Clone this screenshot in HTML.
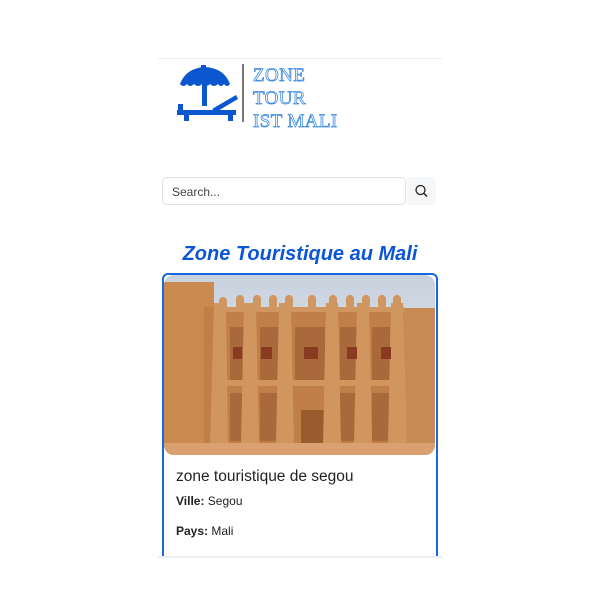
<!DOCTYPE html>
<html><head><style>
body{margin:0;width:600px;height:600px;background:#fff;font-family:"Liberation Sans",sans-serif;position:relative;overflow:hidden}
.hr{position:absolute;left:158px;width:284px;height:1px;background:#eceef0}
.search{position:absolute;left:162px;top:177px;width:244px;height:28px;border:1px solid #dee2e6;border-radius:5px;box-sizing:border-box;font-size:12px;color:#444;padding:7px 9px}
.btn{position:absolute;left:407px;top:177px;width:29px;height:28px;background:#f6f7f8;border-radius:0 5px 5px 0}
h1{position:absolute;left:0;width:600px;top:243px;margin:0;text-align:center;font:italic bold 20px "Liberation Sans",sans-serif;color:#0b56d6}
.card{position:absolute;left:162px;top:273px;width:276px;height:300px;border:2px solid #1a66e0;border-radius:6px;box-sizing:border-box}
.t{position:absolute;left:176px;top:468px;font:500 15.5px "Liberation Sans",sans-serif;color:#222}
.p{position:absolute;left:176px;font:12px "Liberation Sans",sans-serif;color:#222}
.logo{position:absolute;left:253px;top:64px;font:19px "Liberation Serif",serif;color:#fff;-webkit-text-stroke:0.8px #3f8be0;line-height:23px;letter-spacing:0.4px}
</style></head><body>
<div class="hr" style="top:58px"></div>
<svg style="position:absolute;left:174px;top:64px" width="72" height="60">
<path d="M6 20 Q12 4 31 3 Q50 4 56 20 Z" fill="#0b57d0"/>
<path d="M6 20 q3 4 7 0 q3 4 7 0 q4 4 8 0 q4 4 8 0 q4 4 8 0 q3 4 6 0 q3 4 6 0z" fill="#0b57d0"/>
<rect x="28" y="4" width="5" height="38" fill="#0b57d0"/>
<rect x="27" y="1" width="5" height="6" fill="#0b57d0"/>
<rect x="4" y="40" width="5" height="6" fill="#0b57d0"/>
<path d="M3 46 H62 V51 H3Z" fill="#0b57d0"/>
<path d="M38 45 L62 31 L64 35 L42 48Z" fill="#0b57d0"/>
<rect x="10" y="49" width="5" height="8" fill="#0b57d0"/>
<rect x="54" y="49" width="5" height="8" fill="#0b57d0"/>
<rect x="68" y="0" width="2" height="58" fill="#777"/>
</svg>
<div class="logo">ZONE<br>TOUR<br>IST MALI</div>
<div class="search">Search...</div>
<div class="btn"><svg width="29" height="28"><circle cx="13.5" cy="13" r="4.5" fill="none" stroke="#222" stroke-width="1.3"/><path d="M17 16.5 L20 19.5" stroke="#222" stroke-width="1.5"/></svg></div>
<h1>Zone Touristique au Mali</h1>
<div class="card"></div>
<svg style="position:absolute;left:164px;top:275px" width="271" height="180">
<defs><clipPath id="c"><rect width="271" height="180" rx="10"/></clipPath>
<linearGradient id="s" x1="0" y1="0" x2="0" y2="1"><stop offset="0" stop-color="#c8d2de"/><stop offset="1" stop-color="#e6e9ee"/></linearGradient></defs>
<g clip-path="url(#c)">
<rect width="271" height="180" fill="url(#s)"/>
<rect x="0" y="7" width="50" height="173" fill="#c9894f"/>
<rect x="230" y="33" width="41" height="147" fill="#c88a55"/>
<rect x="40" y="32" width="200" height="140" fill="#bf7f46"/>
<g fill="#a9693a">
<rect x="66" y="52" width="14" height="55"/><rect x="96" y="52" width="20" height="55"/><rect x="131" y="52" width="30" height="55"/><rect x="176" y="52" width="17" height="55"/><rect x="208" y="52" width="18" height="55"/>
<rect x="66" y="118" width="14" height="48"/><rect x="96" y="118" width="20" height="48"/><rect x="176" y="118" width="17" height="48"/><rect x="208" y="118" width="18" height="48"/>
</g>
<rect x="137" y="135" width="26" height="38" fill="#9a5c2c"/>
<g fill="#d19660">
<path d="M50 28 H62 L64 170 H46Z"/><path d="M80 28 H92 L95 170 H77Z"/><path d="M115 28 H127 L130 170 H112Z"/><path d="M162 28 H174 L177 170 H159Z"/><path d="M193 28 H205 L208 170 H190Z"/><path d="M227 28 H239 L243 170 H224Z"/>
<rect x="50" y="105" width="190" height="6"/><rect x="50" y="32" width="190" height="5"/>
</g>
<g fill="#cf9662">
<rect x="55" y="22" width="8" height="14" rx="4"/><rect x="72" y="20" width="8" height="14" rx="4"/><rect x="89" y="20" width="8" height="14" rx="4"/><rect x="105" y="20" width="8" height="14" rx="4"/><rect x="121" y="20" width="8" height="14" rx="4"/><rect x="144" y="20" width="8" height="14" rx="4"/><rect x="165" y="20" width="8" height="14" rx="4"/><rect x="182" y="20" width="8" height="14" rx="4"/><rect x="198" y="20" width="8" height="14" rx="4"/><rect x="214" y="20" width="8" height="14" rx="4"/><rect x="229" y="20" width="8" height="14" rx="4"/>
</g>
<g fill="#8a3a20"><rect x="69" y="72" width="9" height="12"/><rect x="97" y="72" width="11" height="12"/><rect x="140" y="72" width="14" height="12"/><rect x="183" y="72" width="10" height="12"/><rect x="217" y="72" width="10" height="12"/></g>
<rect x="0" y="168" width="271" height="12" fill="#dba070"/>
</g></svg>
<div class="t">zone touristique de segou</div>
<div class="p" style="top:494px"><b>Ville:</b> Segou</div>
<div class="p" style="top:524px"><b>Pays:</b> Mali</div>
<div class="hr" style="top:556px;height:2px"></div>
<div style="position:absolute;left:0;top:558px;width:600px;height:42px;background:#fff"></div>
</body></html>
